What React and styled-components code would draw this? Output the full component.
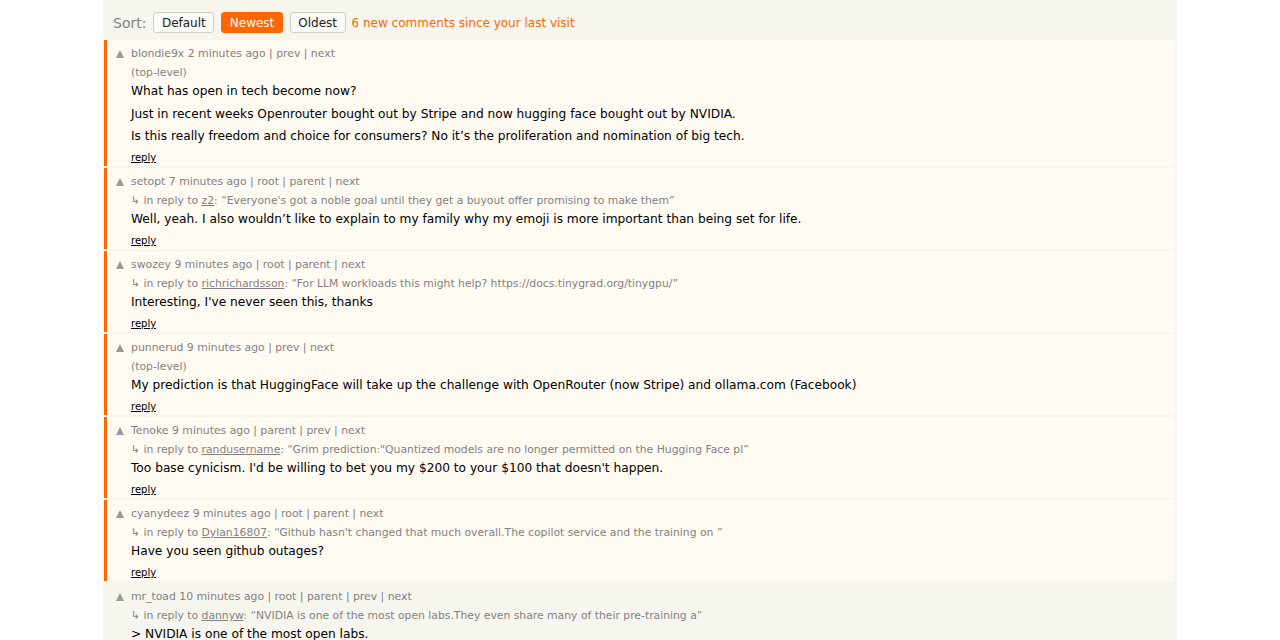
import React from "react";
import styled, { createGlobalStyle } from "styled-components";

const Global = createGlobalStyle`
  html, body { margin: 0; padding: 0; background: #fff; }
  body { font-family: "DejaVu Sans", Verdana, sans-serif; }
`;

const Page = styled.div`
  width: 1074px;
  margin: 0 auto 0 103px;
  background: #f6f6ef;
  padding: 0 2px 0 1px;
  box-sizing: border-box;
  min-height: 640px;
`;

const SortBar = styled.div`
  height: 40px;
  box-sizing: border-box;
  padding: 5px 0 0 9px;
  display: flex;
  align-items: center;
  gap: 7px;
`;

const SortLabel = styled.span`
  color: #828282;
  font-size: 14px;
`;

const SortButton = styled.button`
  font-family: inherit;
  font-size: 12px;
  height: 21px;
  padding: 0 7.5px;
  border-radius: 3px;
  border: 1px solid ${(p) => (p.$active ? "#ff6600" : "#cfcfc5")};
  background: ${(p) => (p.$active ? "#ff6600" : "#fafaf6")};
  color: ${(p) => (p.$active ? "#fff" : "#222")};
  font-weight: normal;
  cursor: pointer;
`;

const NewNote = styled.span`
  color: #ff6600;
  font-size: 12px;
  margin-left: -1px;
`;

const List = styled.div`
  display: flex;
  flex-direction: column;
  gap: 2px;
`;

const Comment = styled.div`
  display: flex;
  background: ${(p) => (p.$new ? "#fffaf2" : "#f6f6ef")};
  border-left: 3px solid ${(p) => (p.$new ? "#ff6600" : "transparent")};
  padding: 7px 0 1px 0;
`;

const Vote = styled.div`
  width: 24px;
  display: flex;
  justify-content: center;
  padding-top: 3px;
  box-sizing: border-box;
  padding-left: 2px;
`;

const Arrow = styled.span`
  width: 0;
  height: 0;
  border-left: 4px solid transparent;
  border-right: 4px solid transparent;
  border-bottom: 8px solid #9a9a9a;
`;

const Body = styled.div`
  flex: 1;
  display: flex;
  flex-direction: column;
`;

const Head = styled.div`
  font-size: 10.85px;
  line-height: 14px;
  height: 14px;
  color: #828282;
  white-space: nowrap;
`;

const Context = styled.div`
  font-size: 10.8px;
  line-height: 14px;
  height: 14px;
  color: #828282;
  margin-top: 5px;
  white-space: nowrap;
`;

const UserLink = styled.span`
  text-decoration: underline;
`;

const Text = styled.div`
  font-size: 12.2px;
  color: #000;
  margin-top: 3px;
  & p { margin: 0; line-height: 16px; height: 16px; white-space: nowrap; }
  & p + p { margin-top: 6.5px; }
`;

const Reply = styled.a`
  display: block;
  font-size: 10px;
  line-height: 14px;
  height: 14px;
  color: #000;
  text-decoration: underline;
  margin-top: 7px;
  align-self: flex-start;
`;

const comments = [
  {
    isNew: true,
    head: "blondie9x 2 minutes ago | prev | next",
    top: true,
    paras: [
      "What has open in tech become now?",
      "Just in recent weeks Openrouter bought out by Stripe and now hugging face bought out by NVIDIA.",
      "Is this really freedom and choice for consumers? No it’s the proliferation and nomination of big tech.",
    ],
  },
  {
    isNew: true,
    head: "setopt 7 minutes ago | root | parent | next",
    user: "z2",
    quote: "Everyone's got a noble goal until they get a buyout offer promising to make them",
    paras: ["Well, yeah. I also wouldn’t like to explain to my family why my emoji is more important than being set for life."],
  },
  {
    isNew: true,
    head: "swozey 9 minutes ago | root | parent | next",
    user: "richrichardsson",
    quote: "For LLM workloads this might help? https://docs.tinygrad.org/tinygpu/",
    paras: ["Interesting, I've never seen this, thanks"],
  },
  {
    isNew: true,
    head: "punnerud 9 minutes ago | prev | next",
    top: true,
    paras: ["My prediction is that HuggingFace will take up the challenge with OpenRouter (now Stripe) and ollama.com (Facebook)"],
  },
  {
    isNew: true,
    head: "Tenoke 9 minutes ago | parent | prev | next",
    user: "randusername",
    quote: "Grim prediction:\"Quantized models are no longer permitted on the Hugging Face pl",
    paras: ["Too base cynicism. I'd be willing to bet you my $200 to your $100 that doesn't happen."],
  },
  {
    isNew: true,
    head: "cyanydeez 9 minutes ago | root | parent | next",
    user: "Dylan16807",
    quote: "Github hasn't changed that much overall.The copilot service and the training on ",
    paras: ["Have you seen github outages?"],
  },
  {
    isNew: false,
    head: "mr_toad 10 minutes ago | root | parent | prev | next",
    user: "dannyw",
    quote: "NVIDIA is one of the most open labs.They even share many of their pre-training a",
    paras: ["> NVIDIA is one of the most open labs."],
  },
];

export default function App() {
  return (
    <>
      <Global />
      <Page>
        <SortBar>
          <SortLabel>Sort:</SortLabel>
          <SortButton>Default</SortButton>
          <SortButton $active>Newest</SortButton>
          <SortButton>Oldest</SortButton>
          <NewNote>6 new comments since your last visit</NewNote>
        </SortBar>
        <List>
          {comments.map((c, i) => (
            <Comment key={i} $new={c.isNew}>
              <Vote>
                <Arrow />
              </Vote>
              <Body>
                <Head>{c.head}</Head>
                {c.top ? (
                  <Context>(top-level)</Context>
                ) : (
                  <Context>
                    ↳ in reply to <UserLink>{c.user}</UserLink>: “{c.quote}”
                  </Context>
                )}
                <Text>
                  {c.paras.map((p, j) => (
                    <p key={j}>{p}</p>
                  ))}
                </Text>
                <Reply href="#">reply</Reply>
              </Body>
            </Comment>
          ))}
        </List>
      </Page>
    </>
  );
}
